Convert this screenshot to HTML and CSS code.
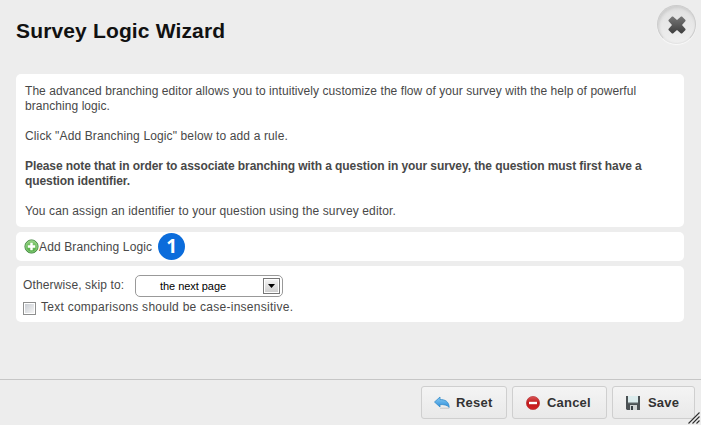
FILE: index.html
```html
<!DOCTYPE html>
<html lang="en">
<head>
<meta charset="utf-8">
<title>Survey Logic Wizard</title>
<link rel="stylesheet" href="styles.css">
</head>
<body>
<main class="dialog">
  <header class="header">
    <h1>Survey Logic Wizard</h1>
    <button class="close" aria-label="Close">
      <svg width="18" height="18" viewBox="0 0 18 18"><defs><linearGradient id="x" x2="0" y2="1"><stop stop-color="#777"/><stop offset="1" stop-color="#3e3e3e"/></linearGradient></defs><path fill="url(#x)" d="M4 .5H5L9 4 13 .5H14L17.5 4V5L14 9 17.5 13V14L14 17.5H13L9 14 5 17.5H4L.5 14V13L4 9 .5 5V4Z"/></svg>
    </button>
  </header>
  <section class="panel intro">
    <p class="first">The advanced branching editor allows you to intuitively customize the flow of your survey with the help of powerful<br>branching logic.</p>
    <p>Click "Add Branching Logic" below to add a rule.</p>
    <p class="strong">Please note that in order to associate branching with a question in your survey, the question must first have a<br>question identifier.</p>
    <p>You can assign an identifier to your question using the survey editor.</p>
  </section>
  <section class="panel add">
    <svg width="15" height="15" viewBox="0 0 15 15"><defs><linearGradient id="g" x2="0" y2="1"><stop stop-color="#8fd07c"/><stop offset="1" stop-color="#49a83c"/></linearGradient></defs><circle cx="7.5" cy="7.5" r="6.6" fill="url(#g)" stroke="#4a8d48"/><circle cx="7.5" cy="7.5" r="5.6" fill="none" stroke="#a4d998" stroke-width=".7"/><path d="M7.5 3.8v7.4M3.8 7.5h7.4" stroke="#fff" stroke-width="2.4"/></svg>
    <span class="add-label">Add Branching Logic</span>
    <span class="badge">1</span>
  </section>
  <section class="panel options">
    <div class="skip">
      <span class="skip-label">Otherwise, skip to:</span>
      <div class="select"><span>the next page</span>
        <i class="drop"><svg width="7" height="4" viewBox="0 0 7 4"><path d="M0 0h7L3.5 4Z"/></svg></i>
      </div>
    </div>
    <label class="check"><i class="box"></i><span>Text comparisons should be case-insensitive.</span></label>
  </section>
  <footer class="footer">
    <button class="btn reset">
      <svg width="16" height="13" viewBox="0 0 16 13"><defs><linearGradient id="b" x2="0" y2="1"><stop stop-color="#8bcdf4"/><stop offset="1" stop-color="#2b8ddb"/></linearGradient></defs><path fill="url(#b)" stroke="#358cc9" stroke-width=".8" stroke-linejoin="round" d="M.5 6 6 1V3.6C11 3.4 15 5.5 15.2 11.5 13.2 9 10 8.4 6 8.6V11Z"/><path d="M6 12.2h9" stroke="#c4c4c4"/></svg><span>Reset</span>
    </button>
    <button class="btn cancel">
      <svg width="14" height="14" viewBox="0 0 14 14"><defs><linearGradient id="r" x2="0" y2="1"><stop stop-color="#d95454"/><stop offset=".5" stop-color="#c01a1d"/><stop offset="1" stop-color="#d42022"/></linearGradient></defs><circle cx="7" cy="7" r="6.6" fill="url(#r)" stroke="#b73336" stroke-width=".7"/><path fill="#fff" d="M3 5.8h8v2.4H3z"/></svg><span>Cancel</span>
    </button>
    <button class="btn save">
      <svg width="14" height="14" viewBox="0 0 14 14"><path fill="#4b5154" d="M0 0h14v14H1L0 13Z"/><path fill="#dceced" d="M2 0h10v7H2z"/><path fill="#9eabad" d="M2 6h10v1.2H2z"/><path fill="#d0d4d4" d="M4 9h7v5H4z"/><path fill="#384044" d="M5 10h2v4H5z"/></svg><span>Save</span>
    </button>
    <svg class="grip" width="12" height="12" viewBox="0 0 12 12"><path fill="none" stroke="#2e2e2e" stroke-width="1.1" d="M.5 11.5l11-11M4.5 11.5l7-7M8.5 11.5l3-3"/></svg>
  </footer>
</main>
</body>
</html>
```
FILE: styles.css
```css
* { box-sizing: border-box; }
body { margin: 0; font: 12px/15px "Liberation Sans", Arial, sans-serif; color: #484848; }
svg { display: block; flex: none; }
i { display: block; }
button { font-family: inherit; }
.dialog { position: relative; width: 701px; height: 425px; background: #ededed; display: flex; flex-direction: column; overflow: hidden; }
.header { height: 74px; display: flex; justify-content: space-between; padding: 5px 5px 0 16px; flex: none; }
h1 { margin: 13px 0 0; font-size: 21px; line-height: 26px; color: #111; letter-spacing: .15px; }
.close { width: 39px; height: 39px; padding: 0; display: grid; place-items: center; border: 1px solid #ccc; border-bottom-color: #e4e4e4; border-radius: 50%; background: linear-gradient(#e1e1e1, #efefef); box-shadow: inset 1px 2px 3px #ccc, 0 1px 1px #fafafa; }
.panel { width: 668px; margin: 0 0 5px 16px; background: #fff; border-radius: 5px; flex: none; }
.intro { height: 153px; padding: 10px 9px 0; white-space: nowrap; }
.intro p { margin: 0 0 15px; letter-spacing: .13px; }
.intro .first { letter-spacing: .06px; }
.intro .strong { font-weight: bold; letter-spacing: -.083px; }
.add { height: 29px; display: flex; align-items: center; padding-left: 8px; }
.add-label { letter-spacing: .13px; padding-top: 1px; }
.badge { width: 27px; height: 27px; margin-left: 6px; border-radius: 50%; background: #0b6cdb; color: #fff; font: bold 19px/27px "Open Sans", sans-serif; text-align: center; }
.options { height: 56px; padding: 9px 7px 0; letter-spacing: .13px; }
.skip { display: flex; height: 22px; }
.skip-label { width: 112px; line-height: 20px; }
.select { width: 148px; height: 22px; display: flex; align-items: center; justify-content: space-between; padding: 0 2px 0 24px; border: 1px solid #999; border-radius: 5px; color: #000; font-size: 11px; letter-spacing: -.05px; }
.drop { width: 17px; height: 16px; display: grid; place-items: center; border: 1px solid #777; background: linear-gradient(#f5f5f5, #ccc); box-shadow: inset 0 0 0 1px #fff; }
.check { display: flex; margin-top: 3px; }
.check span { margin-left: 5px; line-height: 14px; letter-spacing: .26px; }
.box { width: 13px; height: 13px; margin-top: 2px; border: 1px solid #8e8f8f; background: linear-gradient(135deg, #c9cdd3, #f5f5f5) content-box; padding: 1px; }
.footer { height: 46px; margin-top: auto; padding: 6px 6px 0; border-top: 1px solid #c6c6c6; display: flex; justify-content: flex-end; gap: 5px; }
.btn { height: 33px; padding: 0; display: flex; align-items: center; justify-content: flex-start; border: 1px solid #cfcfcf; border-radius: 3px; background: linear-gradient(#f4f4f4, #e9e9e9); color: #333; font-size: 13px; font-weight: bold; letter-spacing: .2px; }
.reset { width: 86px; padding-left: 12px; }
.reset span { margin-left: 6px; }
.cancel { width: 95px; padding-left: 13px; }
.cancel span { margin-left: 7px; }
.save { width: 83px; padding-left: 13px; }
.save span { margin-left: 8px; }
.grip { position: absolute; right: 1px; bottom: 1px; }
```
